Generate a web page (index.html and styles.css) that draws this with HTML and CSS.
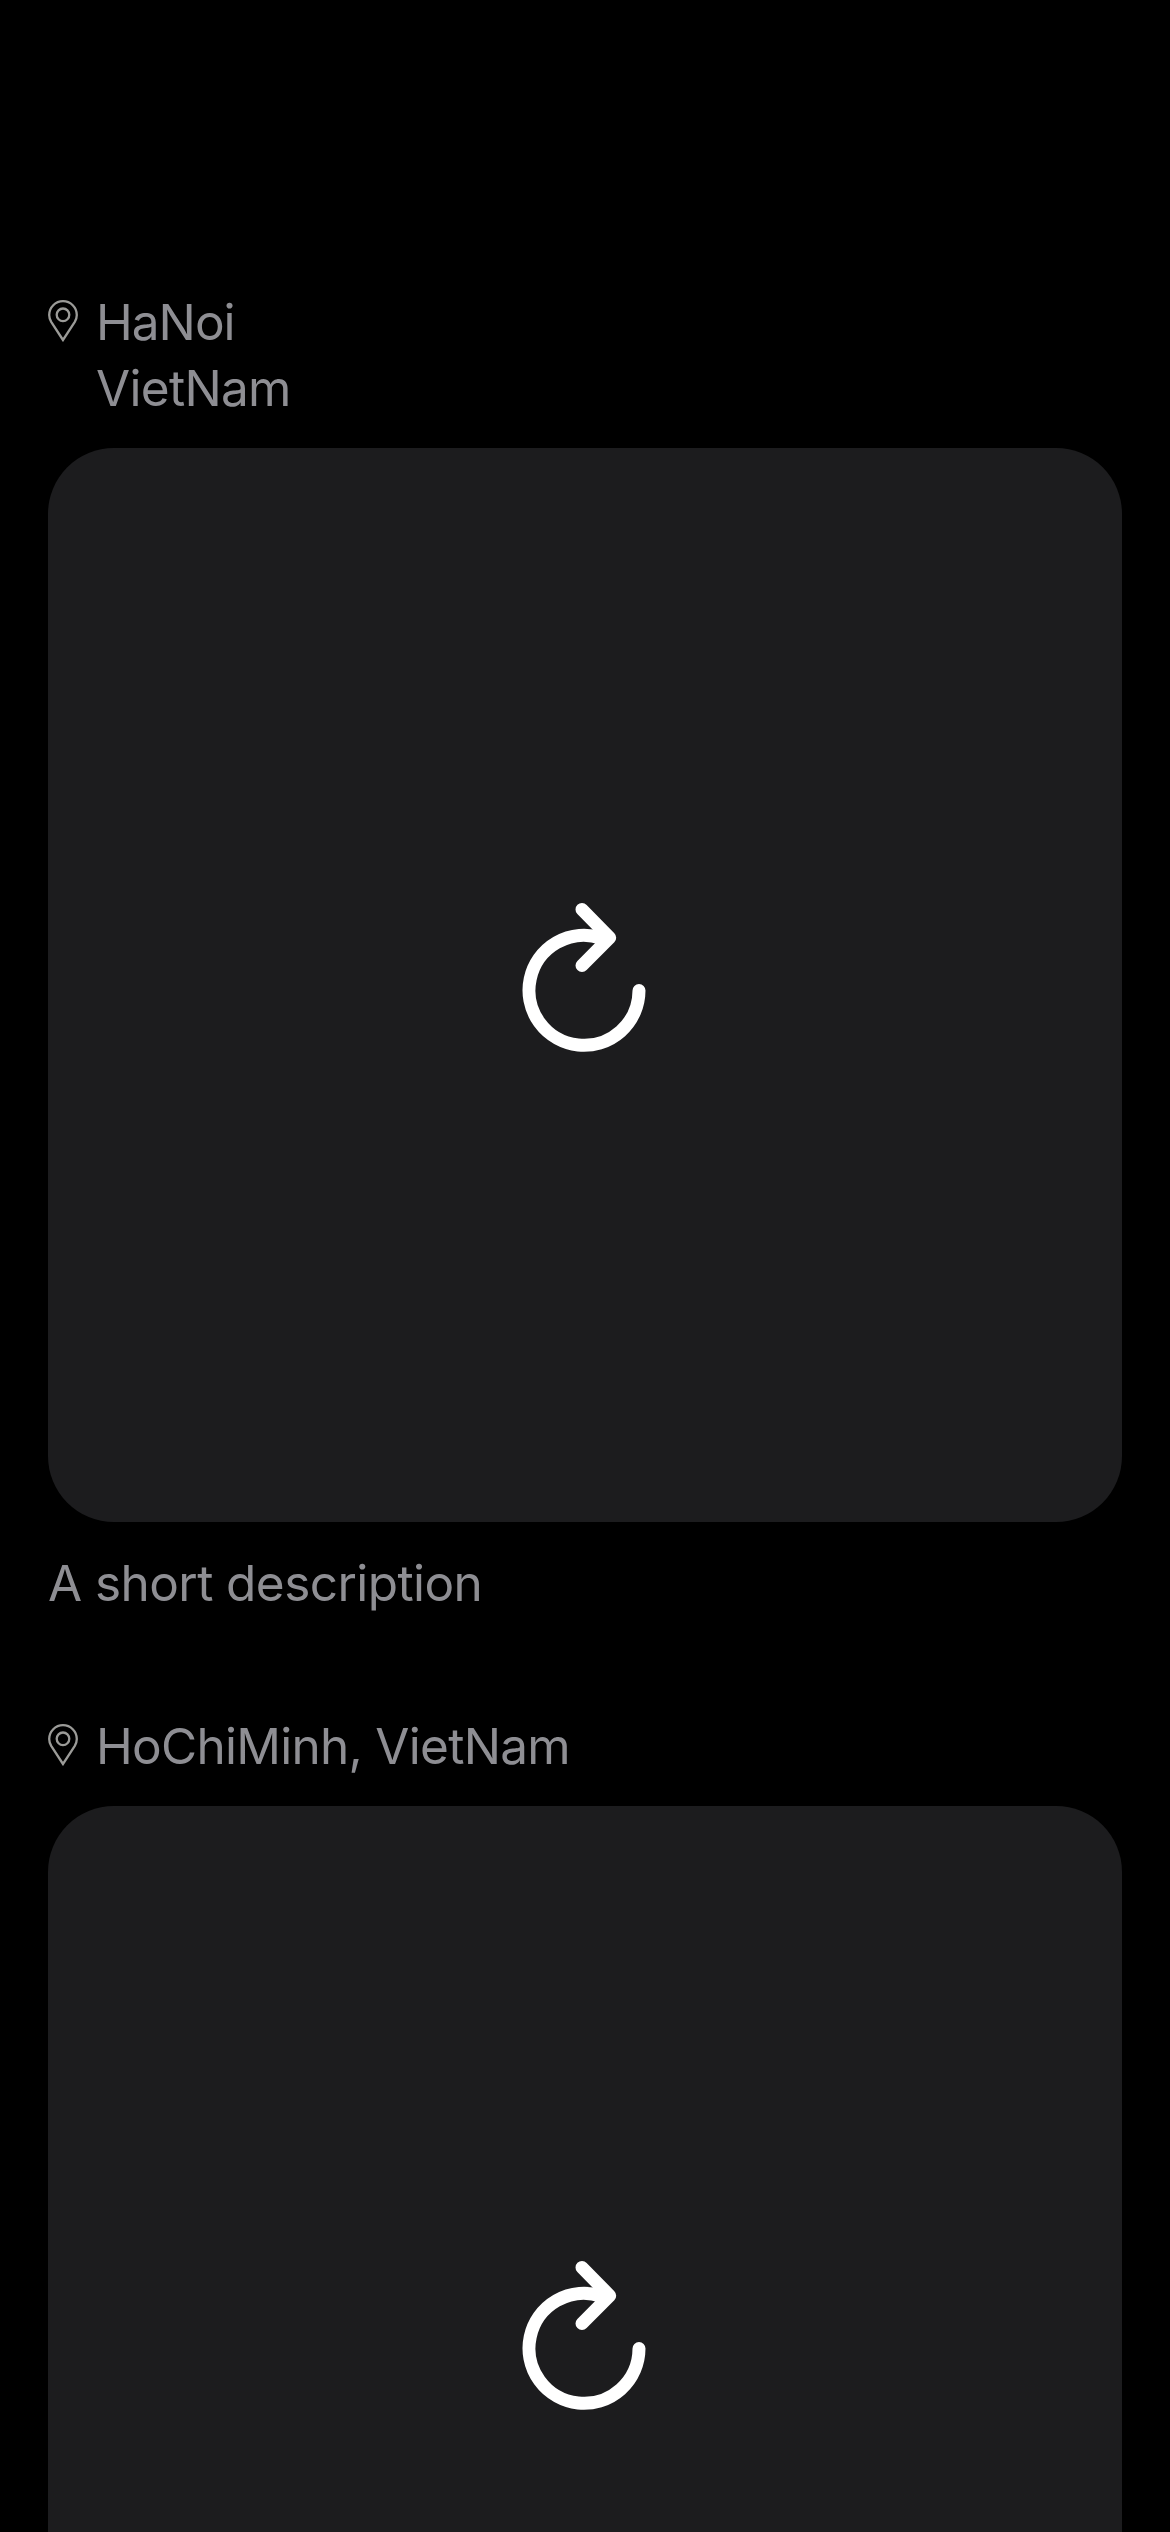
FILE: index.html
```html
<!DOCTYPE html>
<html lang="en">
<head>
<meta charset="utf-8">
<title>Places</title>
<link rel="stylesheet" href="styles.css">
</head>
<body>
<svg class="symbols" aria-hidden="true">
  <symbol id="pin" viewBox="0 0 30 42">
    <path d="M15 40 L3.2 21.8 C1.8 19.5 1.2 17.5 1.2 15 A13.8 13.8 0 0 1 28.8 15 C28.8 17.5 28.2 19.5 26.8 21.8 Z"/>
    <circle cx="15" cy="14.8" r="6.3"/>
  </symbol>
  <symbol id="reload" viewBox="0 0 124 150">
    <path d="M117 87.5 A55 55 0 1 1 79 35"/>
    <path d="M60 6.5 L87.7 34.7 L60 62.5"/>
  </symbol>
</svg>
<main class="feed">
  <article class="post">
    <header class="place">
      <svg class="pin"><use href="#pin"/></svg>
      <div class="place-name"><span class="city">HaNoi</span><br><span class="country">VietNam</span></div>
    </header>
    <div class="photo"><svg class="reload"><use href="#reload"/></svg></div>
    <p class="description">A short description</p>
  </article>
  <article class="post">
    <header class="place">
      <svg class="pin"><use href="#pin"/></svg>
      <div class="place-name"><span class="full-name">HoChiMinh, VietNam</span></div>
    </header>
    <div class="photo"><svg class="reload"><use href="#reload"/></svg></div>
  </article>
</main>
</body>
</html>
```
FILE: styles.css
```css
html, body {
  margin: 0;
  height: 2532px;
  overflow: hidden;
  background: #000;
}
.symbols {
  display: none;
}
.feed {
  box-sizing: border-box;
  height: 2532px;
  overflow: hidden;
  padding: 289px 48px 0;
  display: flex;
  flex-direction: column;
  gap: 97px;
  color: #8e8e93;
  font: 400 49.5px/66px Inter, "Liberation Sans", sans-serif;
}
.post {
  flex: none;
}
.place {
  display: flex;
  align-items: flex-start;
  gap: 18px;
  margin-bottom: 27px;
}
.pin {
  width: 30px;
  height: 42px;
  margin-top: 11px;
  fill: none;
  stroke: #9b9b98;
  stroke-width: 2.3;
}
.city {
  letter-spacing: -1px;
}
.country {
  letter-spacing: -0.7px;
}
.full-name {
  letter-spacing: -0.72px;
}
.photo {
  height: 1074px;
  border-radius: 66px;
  background: #1c1c1e;
  display: grid;
  place-items: center;
}
.reload {
  width: 124px;
  height: 150px;
  margin: 0 3px 14px 0;
  fill: none;
  stroke: #fff;
  stroke-width: 13;
  stroke-linecap: round;
  stroke-linejoin: round;
}
.description {
  margin: 28px 0 0;
  letter-spacing: -0.57px;
}
```
